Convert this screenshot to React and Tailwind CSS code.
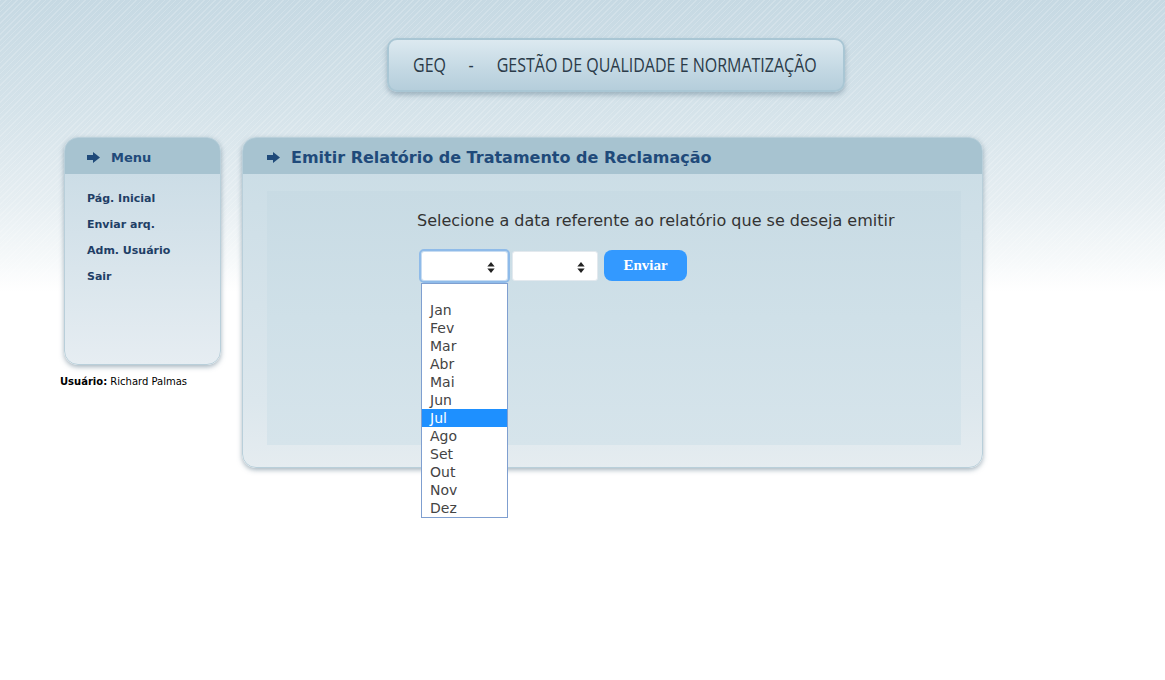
import { useState } from "react";

const months = ["", "Jan", "Fev", "Mar", "Abr", "Mai", "Jun", "Jul", "Ago", "Set", "Out", "Nov", "Dez"];

const Arrow = ({ className }) => (
  <svg viewBox="0 0 13 11" className={className}>
    <polygon points="0,3 6,3 6,0 13,5.5 6,11 6,8 0,8" fill="#1f4a7a" />
  </svg>
);

const SelectBox = ({ focused, width }) => (
  <div
    className={`relative h-[30px] bg-white rounded-[3px] ${width} ${
      focused ? "outline-2 outline-[#8fbbe9] border border-[#c7dcf2]" : "border border-[#e3e9ee]"
    }`}
  >
    <svg viewBox="0 0 8 12" className="absolute right-[12px] top-[10px] w-[8px] h-[11px]">
      <polygon points="0,5 4,0 8,5" fill="#222" />
      <polygon points="0,7 8,7 4,12" fill="#222" />
    </svg>
  </div>
);

const App = () => {
  const [selected] = useState("Jul");

  return (
    <div className="min-h-[680px] w-full bg-white bg-[repeating-linear-gradient(135deg,rgba(255,255,255,0.18)_0px,rgba(255,255,255,0.18)_1px,transparent_1px,transparent_4px),linear-gradient(to_bottom,#c6d9e3_0px,#d5e3ea_110px,#e6eef2_200px,#f6f9fa_260px,#ffffff_292px)] bg-no-repeat bg-[length:100%_300px] font-['DejaVu_Sans',Verdana,sans-serif]">
      {/* Banner */}
      <div className="pt-[38px] pl-[387px]">
        <div className="w-[458px] h-[54px] rounded-[10px] border-2 border-[#a9c6d4] bg-[linear-gradient(to_bottom,#dce9f0,#c3d8e3_60%,#b5cedb)] shadow-[0_3px_5px_rgba(90,120,140,0.45)] flex items-center pl-[24px]">
          <div className="flex items-center text-[20px] text-[#2b3b49] font-['Open_Sans',sans-serif] origin-left scale-x-[0.8] whitespace-nowrap">
            <span>GEQ</span>
            <span className="ml-[28px]">-</span>
            <span className="ml-[29px]">GESTÃO DE QUALIDADE E NORMATIZAÇÃO</span>
          </div>
        </div>
      </div>

      <div className="flex items-start mt-[45px] pl-[60px]">
        {/* Left column */}
        <div className="w-[182px]">
          <div className="ml-[4px] w-[157px] h-[228px] rounded-[14px] overflow-hidden bg-[linear-gradient(to_bottom,#c7dae4,#e6edf2)] shadow-[0_2px_5px_rgba(80,110,130,0.5)] border border-[#b9cfda]">
            <div className="h-[36px] bg-[#a7c3d0] flex items-center pl-[22px] pt-[3px] gap-[11px]">
              <Arrow className="w-[13px] h-[11px]" />
              <span className="text-[13px] font-bold text-[#1f4a7a]">Menu</span>
            </div>
            <ul className="pt-[17px] pl-[22px] flex flex-col gap-[10px] text-[11px] font-bold text-[#1f3e66]">
              <li className="h-[16px] leading-[16px]">Pág. Inicial</li>
              <li className="h-[16px] leading-[16px]">Enviar arq.</li>
              <li className="h-[16px] leading-[16px]">Adm. Usuário</li>
              <li className="h-[16px] leading-[16px]">Sair</li>
            </ul>
          </div>
          <p className="mt-[9px] text-[10px] text-black">
            <span className="font-bold">Usuário:</span> Richard Palmas
          </p>
        </div>

        {/* Main panel */}
        <div className="w-[741px] rounded-[14px] bg-[linear-gradient(to_bottom,#c9dce5,#dce7ed_80%,#e5ecf0)] shadow-[0_2px_5px_rgba(80,110,130,0.5)] border border-[#b9cfda]">
          <div className="h-[36px] rounded-t-[13px] bg-[#a7c3d0] flex items-center pl-[24px] pt-[3px] gap-[11px]">
            <Arrow className="w-[13px] h-[11px]" />
            <span className="text-[16px] font-bold text-[#1f4a7a]">
              Emitir Relatório de Tratamento de Reclamação
            </span>
          </div>
          <div className="pl-[24px] pr-[21px] pt-[17px] pb-[22px]">
            <div className="relative h-[254px] bg-[linear-gradient(to_bottom,#c8dbe4,#cfe0e8_50%,#d6e4eb)] pl-[150px] pt-[18px]">
              <p className="text-[16px] text-[#333] leading-[24px]">
                Selecione a data referente ao relatório que se deseja emitir
              </p>
              <div className="flex items-center gap-[4px] mt-[17px] ml-[4px]">
                <SelectBox focused width="w-[87px]" />
                <SelectBox width="w-[86px]" />
                <button className="ml-[2px] w-[83px] h-[31px] rounded-[8px] bg-[#3399ff] text-white font-bold text-[15px] font-['Liberation_Serif',serif]">
                  Enviar
                </button>
              </div>

              {/* open month list */}
              <ul className="absolute left-[154px] top-[92px] w-[87px] bg-white border border-[#7f9fd0] text-[14px] text-[#444] z-10">
                {months.map((m, i) => (
                  <li
                    key={i}
                    className={`${i === 0 ? "h-[17px]" : "h-[18px]"} leading-[18px] pl-[8px] ${
                      m === selected ? "bg-[#1e90ff] text-white" : ""
                    }`}
                  >
                    {m}
                  </li>
                ))}
              </ul>
            </div>
          </div>
        </div>
      </div>
    </div>
  );
};

export default App;
